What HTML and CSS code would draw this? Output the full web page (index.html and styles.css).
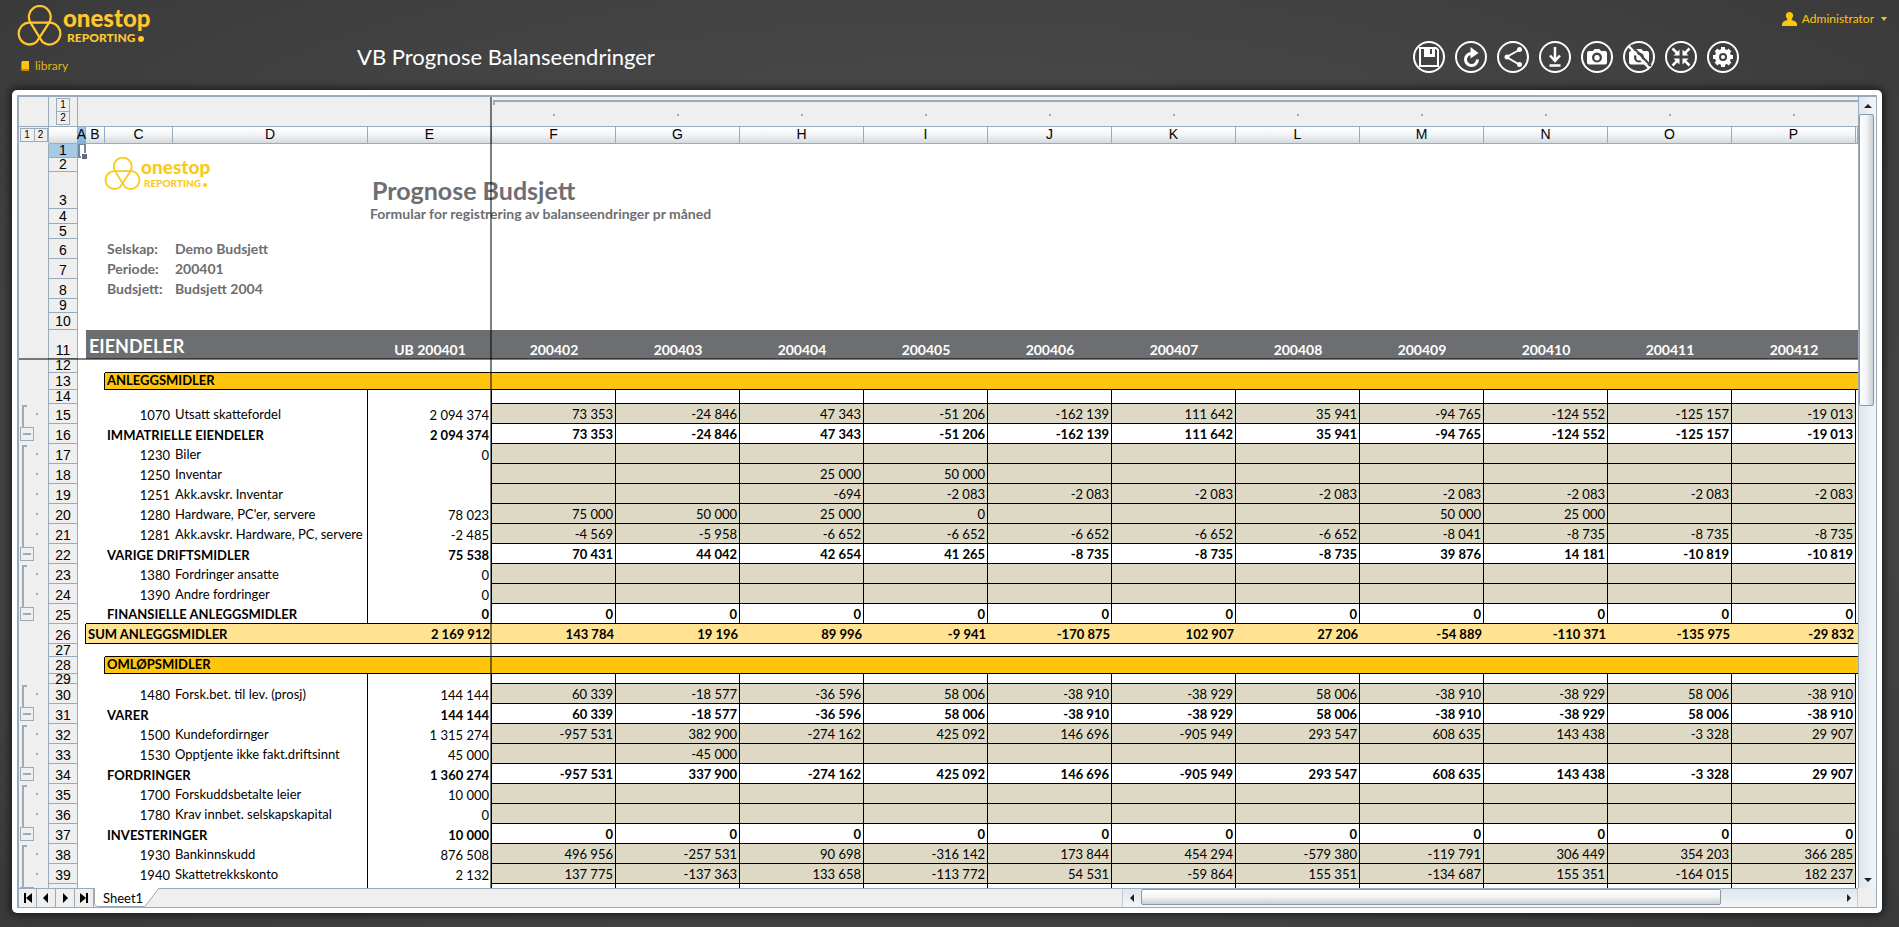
FILE: index.html
```html
<!DOCTYPE html>
<html lang="no">
<head>
<meta charset="utf-8">
<title>VB Prognose Balanseendringer</title>
<link rel="stylesheet" href="styles.css">
</head>
<body>
<svg class="sprite" aria-hidden="true">
  <symbol id="trefoil" viewBox="48 14 140 126">
    <g fill="none" stroke="currentColor" stroke-width="7" stroke-linejoin="round">
      <path d="M90 68A34 34 0 1 1 148 68Z"/>
      <path d="M90 68A34 34 0 1 0 108 129Q112 124 148 68"/>
      <path d="M148 68A34 34 0 1 1 128 129Q124 124 90 68"/>
    </g>
  </symbol>
</svg>
<header class="topbar">
  <div class="brand">
    <a class="logo" href="#"><svg class="logo-mark"><use href="#trefoil"/></svg><span class="logo-text"><b>onestop</b><small>REPORTING<i></i></small></span></a>
    <a class="library" href="#"><svg viewBox="0 0 8 10"><path fill="#ffc50d" d="M1 0h7v8H1z"/><path fill="#b98d0a" d="M0 1h1v7h7v2H1L0 9z"/></svg>library</a>
  </div>
  <h1 class="title">VB Prognose Balanseendringer</h1>
  <nav class="tools" aria-label="Report tools">
    <button type="button" aria-label="Save"><svg viewBox="0 0 32 32"><path fill="none" stroke="#fff" stroke-width="2" d="M7 7h16l2 2V25H7z"/><path fill="#fff" fill-rule="evenodd" d="M11 7h11v9H11zM17 8v5h2V8z"/></svg></button>
    <button type="button" aria-label="Refresh"><svg viewBox="0 0 32 32"><path fill="none" stroke="#fff" stroke-width="3" d="M18 12.500h-2a6 6 0 1 0 6.500 6"/><path fill="#fff" d="M15.500 6l8 6-8 5.500z"/></svg></button>
    <button type="button" aria-label="Share"><svg viewBox="0 0 32 32"><path fill="none" stroke="#fff" stroke-width="2" d="M23 8.500L9.500 16 23 24"/><g fill="#fff"><circle cx="22.500" cy="8.500" r="2.500"/><circle cx="10" cy="16" r="2.500"/><circle cx="22.500" cy="23.500" r="2.500"/></g></svg></button>
    <button type="button" aria-label="Download"><svg viewBox="0 0 32 32"><path fill="none" stroke="#fff" stroke-width="2.500" d="M16 6v14M11 14.500l5 5.500 5-5.500M10.500 24.500h11"/></svg></button>
    <button type="button" aria-label="Snapshot"><svg viewBox="0 0 32 32"><path fill="#fff" fill-rule="evenodd" d="M8 10h4l1.500-2h5L20 10h4q2 0 2 2v9.500q0 2-2 2H8q-2 0-2-2V12q0-2 2-2zM16 11.500a5 5 0 1 0 .01 0zM16 14a2.800 2.800 0 1 1-.01 0z"/></svg></button>
    <button type="button" aria-label="Remove snapshot"><svg viewBox="0 0 32 32"><path fill="#fff" fill-rule="evenodd" d="M8 10h4l1.500-2h5L20 10h4q2 0 2 2v9.500q0 2-2 2H8q-2 0-2-2V12q0-2 2-2zM16 11.500a5 5 0 1 0 .01 0zM16 14a2.800 2.800 0 1 1-.01 0z"/><path stroke="#464647" stroke-width="2" d="M8 4l20 21"/><path stroke="#fff" stroke-width="2.500" d="M5.500 5L26 27"/></svg></button>
    <button type="button" aria-label="Collapse"><svg viewBox="0 0 32 32"><path fill="none" stroke="#fff" stroke-width="2.500" d="M7.500 7.500l6 6M24.500 7.500l-6 6M7.500 24.500l6-6M24.500 24.500l-6-6"/><path fill="#fff" d="M14.500 8.500v6h-6zM17.500 8.500v6h6zM14.500 23.500v-6h-6zM17.500 23.500v-6h6z"/></svg></button>
    <button type="button" aria-label="Settings"><svg viewBox="0 0 32 32"><circle cx="16" cy="16" r="6" fill="none" stroke="#fff" stroke-width="4"/><g stroke="#fff" stroke-width="4"><path d="M16 6v3M16 23v3M6 16h3M23 16h3M9 9l2 2M21 21l2 2M23 9l-2 2M11 21l-2 2"/></g><circle cx="16" cy="16" r="2" fill="#fff"/></svg></button>
  </nav>
  <button type="button" class="user"><svg viewBox="0 0 15 14"><path fill="#ffc50d" d="M7.500 0a3.500 3.500 0 0 1 3 5.500L9.500 8q5 1 5.500 4v2H0v-2q.5-3 5.500-4L4.500 5.500A3.500 3.500 0 0 1 7.500 0z"/></svg>Administrator<span class="caret"></span></button>
</header>
<main class="panel">
  <section class="book">
    <div class="view">
      <table class="sheet">
        <colgroup><col class="w-out"><col class="w-num"><col class="w-a"><col class="w-b"><col class="w-c"><col class="w-d"><col class="w-v" span="12"><col></colgroup>
        <thead></thead>
        <tbody></tbody>
      </table>
      <div class="freeze freeze-v"></div>
      <div class="freeze freeze-h"></div>
    </div>
    <div class="vscroll"><button type="button" class="arrow up" aria-label="Scroll up"></button><div class="vthumb"></div><button type="button" class="arrow down" aria-label="Scroll down"></button></div>
    <div class="tabs">
      <div class="tabnav">
        <button type="button" aria-label="First sheet"><svg viewBox="0 0 12 12"><path d="M2 1h2v10H2zM10 1v10L4 6z"/></svg></button>
        <button type="button" aria-label="Previous sheet"><svg viewBox="0 0 12 12"><path d="M8 1v10L3 6z"/></svg></button>
        <button type="button" aria-label="Next sheet"><svg viewBox="0 0 12 12"><path d="M4 1v10l5-5z"/></svg></button>
        <button type="button" aria-label="Last sheet"><svg viewBox="0 0 12 12"><path d="M8 1h2v10H8zM2 1v10l6-5z"/></svg></button>
      </div>
      <button type="button" class="tab"><svg viewBox="0 0 65 19"><path fill="#fff" stroke="#9aabbc" d="M.5 0V15q0 3.500 3.500 3.500H51L65 0"/></svg><span>Sheet1</span></button>
      <div class="hscroll"><button type="button" class="arrow left" aria-label="Scroll left"></button><div class="hthumb"></div><button type="button" class="arrow right" aria-label="Scroll right"></button></div>
    </div>
    <div class="corner"></div>
  </section>
</main>
<script src="sheet.js"></script>
</body>
</html>
```

FILE: styles.css
```css
* { box-sizing: border-box; }
:root { --line: #9aabbc; --head: #efefef; --yellow: #ffc50d; }
body { margin: 0; min-height: 100vh; display: flex; flex-direction: column; background: radial-gradient(ellipse at center, #4e4e4f 0%, #464647 60%, #3a3a3b 100%); font-family: Lato, sans-serif; font-size: 13px; color: #000; }
button { margin: 0; padding: 0; border: 0; background: none; font: inherit; color: inherit; cursor: pointer; }
a { color: inherit; text-decoration: none; }
.sprite { position: absolute; width: 0; height: 0; }

.topbar { flex: none; height: 90px; display: flex; align-items: flex-start; color: #fff; }
.brand { width: 357px; padding: 5px 0 0 17px; color: #ffc62d; }
.logo { display: flex; gap: 1px; color: inherit; }
.logo-mark { width: 45px; height: 41px; }
.logo-text { display: flex; flex-direction: column; }
.logo-text b { font-size: 24px; line-height: 25px; font-weight: 900; }
.logo-text small { display: flex; align-items: baseline; gap: 3px; padding-left: 4px; font-size: 12px; line-height: 16px; font-weight: 900; }
.logo-text i { width: 6px; height: 6px; border-radius: 50%; background: currentColor; }
.library { display: flex; align-items: center; gap: 6px; margin: 11px 0 0 4px; font-size: 12px; line-height: 18px; color: #e6b40f; }
.library svg { width: 8px; height: 10px; }
.title { margin: 40px auto 0 0; font-size: 22px; line-height: 34px; font-weight: 400; white-space: nowrap; }
.tools { display: flex; gap: 10px; margin-top: 41px; }
.tools button { width: 32px; height: 32px; border: 2px solid #fff; border-radius: 50%; }
.tools svg { display: block; width: 32px; height: 32px; margin: -2px; }
.user { display: flex; justify-content: flex-end; align-items: center; gap: 5px; width: 160px; margin-top: 9px; padding-right: 12px; font-size: 12px; line-height: 20px; color: var(--yellow); }
.user svg { width: 15px; height: 14px; }
.caret { border: 3px solid transparent; border-top: 4px solid var(--yellow); border-bottom: 0; margin-left: 2px; }

.panel { flex: 1; display: flex; min-height: 0; margin: 0 17px 15px 12px; padding: 5px; background: #fff; border-radius: 5px; box-shadow: 0 0 8px 2px rgba(0, 0, 0, .6); }
.book { flex: 1; min-width: 0; display: grid; grid-template: minmax(0, 1fr) 19px / minmax(0, 1fr) 18px; border: solid var(--line); border-width: 2px 1px 1px 2px; background: var(--head); }
.view { position: relative; overflow: hidden; background: #fff; max-height: calc(100vh - 136px); }
.freeze { position: absolute; background: rgba(0, 0, 0, .5); }
.freeze-v { left: 471px; top: 0; bottom: 0; width: 2px; }
.freeze-h { left: 0; right: 0; top: 261px; height: 2px; }

.sheet { width: 100%; min-width: 1839px; table-layout: fixed; border-collapse: separate; border-spacing: 0; }
.w-out { width: 30px; } .w-num { width: 29px; } .w-a { width: 8px; } .w-b { width: 19px; }
.w-c { width: 68px; } .w-d { width: 195px; } .w-v { width: 124px; }
.sheet th, .sheet td { padding: 0; font-weight: 400; text-align: left; vertical-align: top; }
.cell { display: flex; align-items: flex-end; white-space: nowrap; line-height: 18px; padding: 0 2px; border: 0 solid #000; }
.h10 .cell { height: 10px; } .h13 .cell { height: 13px; } .h14 .cell { height: 14px; } .h15 .cell { height: 15px; }
.h17 .cell { height: 17px; } .h20 .cell { height: 20px; } .h29 .cell { height: 29px; } .h30 .cell { height: 30px; } .h37 .cell { height: 37px; }
.sheet .num { justify-content: flex-end; }
.sheet .code { padding-right: 3px; }
.sheet .mid { justify-content: center; }
.sheet .out { position: relative; padding: 0; background: var(--head); border-right: 1px solid var(--line); }
.sheet .rowno { justify-content: center; align-items: flex-end; padding: 0; background: var(--head); border: solid var(--line); border-width: 0 1px 1px 0; font-family: "Liberation Sans", sans-serif; font-size: 14px; line-height: 16px; }
.sheet .h10 .rowno, .sheet .h13 .rowno { align-items: center; }
.h14 .rowno, .h15 .rowno { line-height: 13px; }
.sheet .rowno.on { background: #a6c9e6; }
.colhead .cell { justify-content: center; padding: 0; border: solid var(--line); border-width: 0 1px 1px 0; background: linear-gradient(#fff, #f1f4f6 50%, #d5dade); font-family: "Liberation Sans", sans-serif; font-size: 14px; line-height: 18px; }
.colhead .cell.on { background: linear-gradient(#a6c9e6, #7fb2de); }
.colhead .cell.out { background: var(--head); border-bottom-color: transparent; align-items: center; }
.band .cell { position: relative; padding: 0; background: var(--head); border-bottom: 1px solid var(--line); }
.band .line::before { content: ""; position: absolute; left: 0; right: 0; top: 3px; height: 2px; background: var(--line); }
.band .start::before { left: 1px; }
.band .start::after { content: ""; position: absolute; left: 1px; top: 3px; width: 2px; height: 5px; background: var(--line); }
.band .edge { border-right: 1px solid var(--line); }
.band .dot { width: 2px; height: 2px; margin: 0 auto 10px; background: var(--line); }
.levels { display: flex; margin: auto; border: 1px solid var(--line); font-family: "Liberation Sans", sans-serif; font-size: 10px; line-height: 12px; }
.levels.stack { flex-direction: column; }
.levels button { width: 13px; height: 12px; }
.levels button + button { border-left: 1px solid var(--line); }
.levels.stack button { width: 12px; height: 12px; }
.levels.stack button + button { height: 13px; border: 0; border-top: 1px solid var(--line); }
.out i { position: absolute; left: 3px; }
.out .bar { left: 3px; top: 0; bottom: 0; width: 2px; background: var(--line); }
.out .bar.first { top: 1px; }
.out .bar.first::after { content: ""; position: absolute; left: 0; top: 0; width: 5px; height: 2px; background: var(--line); }
.out .bar.last { bottom: auto; height: 3px; }
.out .pt { left: 17px; top: 9px; width: 2px; height: 2px; background: var(--line); }
.out .minus { position: absolute; left: 1px; top: 3px; width: 14px; height: 14px; border: 1px solid var(--line); background: linear-gradient(var(--line), var(--line)) center / 8px 2px no-repeat; }

.item .name { line-height: 20px; }
.section .name { line-height: 17px; }
.info .cell { color: #6d6e71; font-weight: 700; font-size: 14px; line-height: 20px; }
.info .cell.rowno { color: #000; font-weight: 400; line-height: 16px; }
.h15.info .cell.rowno { line-height: 13px; }
.info .cell.big { font-size: 25px; line-height: 38px; padding-left: 4px; }
.sheet .a1 { border: 2px solid #76879a; border-top-width: 1px; position: relative; }
.a1::after { content: ""; position: absolute; right: -3px; bottom: -3px; width: 5px; height: 5px; background: #5b6d80; border: solid #fff; border-width: 1px 0 0 1px; }
.mini { display: flex; position: absolute; left: 85px; top: 60px; gap: 0; color: #f9cb17; }
.mini .logo-mark { width: 37px; height: 33px; }
.mini .logo-text b { font-size: 19px; line-height: 20px; }
.mini .logo-text small { font-size: 10px; line-height: 12px; gap: 2px; padding-left: 3px; }
.mini .logo-text i { width: 4px; height: 4px; }

.dark .fill { background: #6d6e71; color: #fff; font-weight: 700; font-size: 14px; }
.dark .cell.sec { font-size: 18px; line-height: 26px; padding-left: 3px; }
.sheet .b { border-bottom-width: 1px; }
.sheet .r { border-right-width: 1px; }
.section .fill { background: var(--yellow); font-weight: 700; }
.total .fill { background: #ffe393; }
.total .name, .total .num, .sub .name, .sub .num { font-weight: 700; }
.item .in { background: #ddd9c4; }

.arrow { display: grid; place-items: center; flex: none; width: 17px; height: 17px; }
.arrow::before { content: ""; border: 4px solid transparent; }
.up::before { border-top: 0; border-bottom-color: #222; }
.down::before { border-bottom: 0; border-top-color: #222; }
.left::before { border-left: 0; border-right-color: #222; }
.right::before { border-right: 0; border-left-color: #222; }
.vscroll { display: flex; flex-direction: column; border-left: 1px solid var(--line); background: linear-gradient(90deg, #dfe6ec, #f3f6f9); }
.vthumb { height: 292px; margin-right: 2px; border: 1px solid #8798a9; border-radius: 2px; background: linear-gradient(90deg, #fff, #f2f4f5 50%, #c9ced2); }
.vscroll .down { margin-top: auto; }
.tabs { display: flex; border-top: 1px solid var(--line); }
.tabnav { display: flex; }
.tabnav button { display: grid; place-items: center; width: 19px; border-right: 1px solid var(--line); }
.tabnav button:first-child { width: 18px; }
.tabnav svg { width: 12px; height: 12px; }
.tab { position: relative; width: 65px; text-align: left; padding-left: 9px; }
.tab svg { position: absolute; left: 0; top: -1px; width: 65px; height: 19px; }
.tab span { position: relative; }
.hscroll { display: flex; width: 40%; margin-left: auto; border: solid #c3ccd5; border-width: 0 1px; background: linear-gradient(#dfe6ec, #f3f6f9); }
.hthumb { width: 79%; height: 16px; margin: 0 1px; border: 1px solid #8798a9; border-radius: 2px; background: linear-gradient(#fff, #f2f4f5 50%, #c9ced2); }
.hscroll .right { margin-left: auto; }
```

FILE: sheet.js
```js
// Rows: [height, kind, code, name, values E..P, outline position]
const P = s => s.split('|');
const rep = (v, n) => Array(n).fill(v);
const r15 = '73 353|-24 846|47 343|-51 206|-162 139|111 642|35 941|-94 765|-124 552|-125 157|-19 013';
const r30 = '144 144|60 339|-18 577|-36 596|58 006|-38 910|-38 929|58 006|-38 910|-38 929|58 006|-38 910';
const none = '|||||||||||';
const rows = [
  [14, 'first'], [14, 'plain'], [37, 'info', '', '', 'Prognose Budsjett'], [15, 'info', '', '', 'Formular for registrering av balanseendringer pr måned'], [15, 'plain'],
  [20, 'info', 'Selskap:', 'Demo Budsjett'], [20, 'info', 'Periode:', '200401'], [20, 'info', 'Budsjett:', 'Budsjett 2004'],
  [14, 'plain'], [17, 'plain'],
  [29, 'dark', '', 'EIENDELER', 'UB 200401|200402|200403|200404|200405|200406|200407|200408|200409|200410|200411|200412'],
  [14, 'gap'], [17, 'section', '', 'ANLEGGSMIDLER'], [14, 'blank'],
  [20, 'item', '1070', 'Utsatt skattefordel', '2 094 374|' + r15, 'first'],
  [20, 'sub', '', 'IMMATRIELLE EIENDELER', '2 094 374|' + r15, 'last'],
  [20, 'item', '1230', 'Biler', '0' + none, 'first'],
  [20, 'item', '1250', 'Inventar', '|||25 000|50 000|||||||', 'mid'],
  [20, 'item', '1251', 'Akk.avskr. Inventar', '|||-694|-2 083|-2 083|-2 083|-2 083|-2 083|-2 083|-2 083|-2 083', 'mid'],
  [20, 'item', '1280', "Hardware, PC'er, servere", '78 023|75 000|50 000|25 000|0||||50 000|25 000||', 'mid'],
  [20, 'item', '1281', 'Akk.avskr. Hardware, PC, servere', '-2 485|-4 569|-5 958|-6 652|-6 652|-6 652|-6 652|-6 652|-8 041|-8 735|-8 735|-8 735', 'mid'],
  [20, 'sub', '', 'VARIGE DRIFTSMIDLER', '75 538|70 431|44 042|42 654|41 265|-8 735|-8 735|-8 735|39 876|14 181|-10 819|-10 819', 'last'],
  [20, 'item', '1380', 'Fordringer ansatte', '0' + none, 'first'],
  [20, 'item', '1390', 'Andre fordringer', '0' + none, 'mid'],
  [20, 'sub', '', 'FINANSIELLE ANLEGGSMIDLER', rep('0', 12).join('|'), 'last'],
  [20, 'total', '', 'SUM ANLEGGSMIDLER', '2 169 912|143 784|19 196|89 996|-9 941|-170 875|102 907|27 206|-54 889|-110 371|-135 975|-29 832'],
  [13, 'gap'], [17, 'section', '', 'OMLØPSMIDLER'], [10, 'blank'],
  [20, 'item', '1480', 'Forsk.bet. til lev. (prosj)', r30, 'first'],
  [20, 'sub', '', 'VARER', r30, 'last'],
  [20, 'item', '1500', 'Kundefordirnger', '1 315 274|-957 531|382 900|-274 162|425 092|146 696|-905 949|293 547|608 635|143 438|-3 328|29 907', 'first'],
  [20, 'item', '1530', 'Opptjente ikke fakt.driftsinnt', '45 000||-45 000|||||||||', 'mid'],
  [20, 'sub', '', 'FORDRINGER', '1 360 274|-957 531|337 900|-274 162|425 092|146 696|-905 949|293 547|608 635|143 438|-3 328|29 907', 'last'],
  [20, 'item', '1700', 'Forskuddsbetalte leier', '10 000' + none, 'first'],
  [20, 'item', '1780', 'Krav innbet. selskapskapital', '0' + none, 'mid'],
  [20, 'sub', '', 'INVESTERINGER', '10 000|' + rep('0', 11).join('|'), 'last'],
  [20, 'item', '1930', 'Bankinnskudd', '876 508|496 956|-257 531|90 698|-316 142|173 844|454 294|-579 380|-119 791|306 449|354 203|366 285', 'first'],
  [20, 'item', '1940', 'Skattetrekkskonto', '2 132|137 775|-137 363|133 658|-113 772|54 531|-59 864|155 351|-134 687|155 351|-164 015|182 237', 'mid'],
  [20, 'sub', '', '', none, 'last']
];
const td = (cls, text = '', span = 1) => `<td colspan="${span}"><div class="cell ${cls}">${text}</div></td>`;
const outline = pos => !pos ? '' : `<i class="bar ${pos}"></i>` +
  (pos === 'last' ? '<button type="button" class="minus" aria-label="Collapse group"></button>' : '<i class="pt"></i>');

function body(kind, code, name, vals, next) {
  const v = vals ? P(vals) : rep('', 12);
  switch (kind) {
    case 'first': return td('a1') + td('', '', 16);
    case 'plain': return td('', '', 17);
    case 'info':
      return code ? td('') + td('') + td('', code) + td('', name) + td('', '', 13)
        : td('', '', 4) + td(vals.length < 20 ? 'big' : '', vals, 13);
    case 'dark': return td('') + td('fill sec', name, 3) + v.map(x => td('fill mid', x)).join('') + td('fill');
    case 'gap': return td('') + td('') + td('b', '', 15);
    case 'section': return td('') + td('r') + td('fill name b', name, 15);
    case 'blank': return td('', '', 3) + td('r') + td('r') + rep(td('r b'), 11).join('') + td('');
    case 'total': return td('r') + td('fill name b', name, 3) + v.map(x => td('fill num b', x)).join('') + td('fill b');
  }
  const b = next === 'total' ? ' b' : '';
  const lead = kind === 'sub' ? td('') + td(b) + td('name r' + b, name, 2)
    : td('') + td('') + td('num code', code) + td('name r', name);
  return lead + td('num r' + b, v[0]) + v.slice(1).map(x => td('num in r b', x)).join('') + td(b);
}

const letters = 'ABCDEFGHIJKLMNOP'.split('');
document.querySelector('.sheet thead').innerHTML =
  `<tr class="band h30">${td('edge')}${td('edge', '<div class="levels stack"><button type="button">1</button><button type="button">2</button></div>')}${td('', '', 5)}` +
  rep(0, 11).map((_, i) => td(i ? 'line' : 'line start', '<span class="dot"></span>')).join('') + td('line') + '</tr>' +
  `<tr class="colhead h17">${td('out', '<div class="levels"><button type="button">1</button><button type="button">2</button></div>')}${td('')}` +
  letters.map((l, i) => `<th scope="col"><div class="cell${i ? '' : ' on'}">${l}</div></th>`).join('') + td('') + '</tr>';
document.querySelector('.sheet tbody').innerHTML = rows.map(([h, kind, code, name, vals, pos], i) =>
  `<tr class="${kind} h${h}">${td('out', outline(pos))}<th scope="row"><div class="cell rowno${i ? '' : ' on'}">${i < 39 ? i + 1 : ''}</div></th>` +
  body(kind, code, name, vals, (rows[i + 1] || [])[1]) + '</tr>').join('');
// The logo picture floats over the top rows of the sheet.
document.querySelector('.view').insertAdjacentHTML('beforeend',
  '<div class="mini"><svg class="logo-mark"><use href="#trefoil"/></svg><span class="logo-text"><b>onestop</b><small>REPORTING<i></i></small></span></div>');
```
